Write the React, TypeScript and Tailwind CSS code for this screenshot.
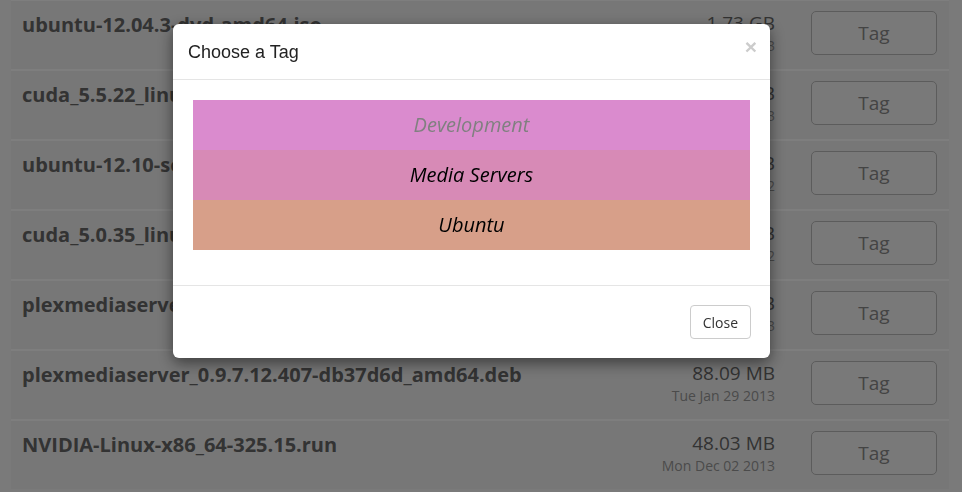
import { useState } from "react";

interface FileRow {
  name: string;
  size: string;
  date: string;
}

const files: FileRow[] = [
  { name: "ubuntu-12.04.3-dvd-amd64.iso", size: "1.73 GB", date: "Thu Oct 03 2013" },
  { name: "cuda_5.5.22_linux_64.run", size: "788.93 MB", date: "Wed Sep 18 2013" },
  { name: "ubuntu-12.10-server-amd64.iso", size: "683.00 MB", date: "Wed Oct 17 2012" },
  { name: "cuda_5.0.35_linux_64_ubuntu.run", size: "1.01 GB", date: "Mon Oct 01 2012" },
  { name: "plexmediaserver_0.9.8.10_amd64.deb", size: "91.56 MB", date: "Tue Dec 10 2013" },
  { name: "plexmediaserver_0.9.7.12.407-db37d6d_amd64.deb", size: "88.09 MB", date: "Tue Jan 29 2013" },
  { name: "NVIDIA-Linux-x86_64-325.15.run", size: "48.03 MB", date: "Mon Dec 02 2013" },
];

const tags = [
  { label: "Development", bg: "bg-[#da8bce]", text: "text-[#808080]" },
  { label: "Media Servers", bg: "bg-[#d78ab6]", text: "text-black" },
  { label: "Ubuntu", bg: "bg-[#d79f89]", text: "text-black" },
];

function TagModal({ onClose }: { onClose: () => void }) {
  return (
    <div className="fixed inset-0 bg-black/50">
      <div className="ml-[173px] mt-[24px] w-[597px] bg-white rounded-[6px] shadow-[0_5px_15px_rgba(0,0,0,0.5)]">
        <div className="flex items-start justify-between pl-[15px] pr-[13px] pt-[16px] pb-[15px] border-b border-[#e5e5e5]">
          <h4 className="font-['Liberation_Sans',Arial,sans-serif] text-[18px] leading-[24px] text-[#222]">
            Choose a Tag
          </h4>
          <button
            onClick={onClose}
            className="font-['Liberation_Sans',Arial,sans-serif] text-[21px] font-bold leading-[14px] text-[#cccccc]"
          >
            ×
          </button>
        </div>

        <div className="px-[20px] pt-[20px] pb-[35px]">
          {tags.map((tag) => (
            <div
              key={tag.label}
              className={`${tag.bg} ${tag.text} h-[50px] flex items-center justify-center font-['Open_Sans',sans-serif] italic text-[20px]`}
            >
              {tag.label}
            </div>
          ))}
        </div>

        <div className="flex justify-end p-[19px] border-t border-[#e5e5e5]">
          <button
            onClick={onClose}
            className="h-[34px] px-[12px] border border-[#cccccc] rounded-[4px] bg-white font-['Open_Sans',sans-serif] text-[14px] text-[#333]"
          >
            Close
          </button>
        </div>
      </div>
    </div>
  );
}

export default function App() {
  const [open, setOpen] = useState(true);

  return (
    <div className="h-screen overflow-hidden bg-[#f5f5f5] font-['Open_Sans',sans-serif]">
      <div className="ml-[11px] w-[938px] mt-[-1px] bg-[#efefef]">
        {files.map((file) => (
          <div key={file.name} className="flex h-[70px] border-t-2 border-[#fcfcfc] pt-[10px] pl-[11px] pr-[12px]">
            <div className="flex-1 min-w-0 text-[20px] leading-[28px] font-bold text-[#666] truncate">
              {file.name}
            </div>
            <div className="flex flex-col items-end mr-[36px] shrink-0">
              <span className="text-[19px] leading-[24px] text-[#666]">{file.size}</span>
              <span className="text-[14px] leading-[22px] text-[#969696]">{file.date}</span>
            </div>
            <button
              onClick={() => setOpen(true)}
              className="w-[126px] h-[44px] shrink-0 rounded-[5px] border border-[#b8b8b8] bg-[#f3f3f3] text-[19px] text-[#888]"
            >
              Tag
            </button>
          </div>
        ))}
      </div>
      {open && <TagModal onClose={() => setOpen(false)} />}
    </div>
  );
}
